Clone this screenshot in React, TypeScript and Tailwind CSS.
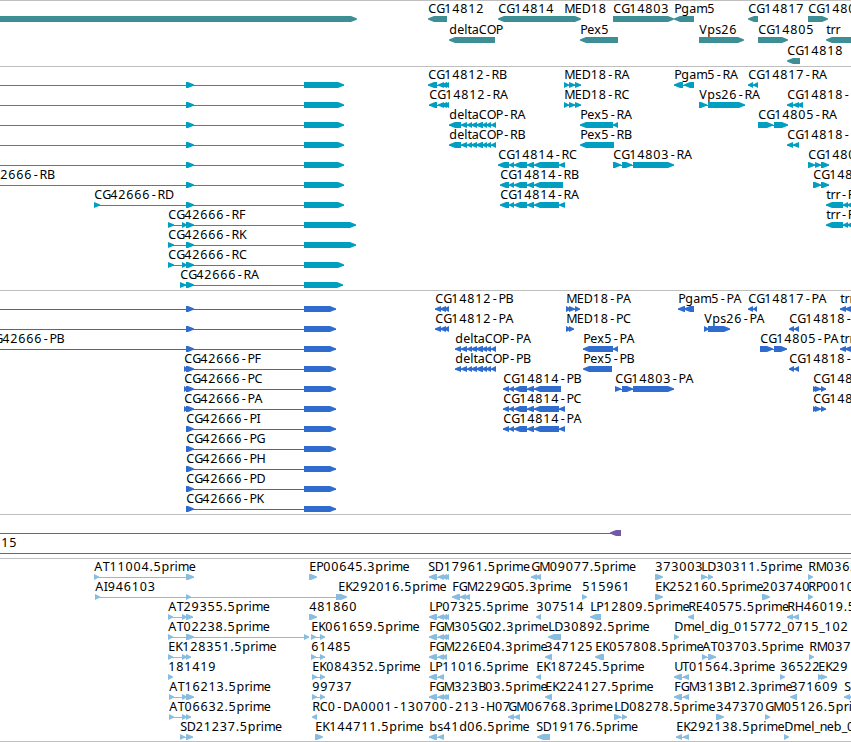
type Span = [number, number];
// row, label, label x, direction, exon spans
type Feature = [number, string, number, ">" | "<", Span[]];

const genes: Feature[] = [
  [0, "", 0, ">", [[-10, 357]]],
  [0, "CG14812", 428, "<", [[428, 447]]],
  [1, "deltaCOP", 449, "<", [[449, 495]]],
  [0, "CG14814", 498, "<", [[498, 566]]],
  [0, "MED18", 564, ">", [[564, 581]]],
  [1, "Pex5", 580, "<", [[580, 618]]],
  [0, "CG14803", 613, ">", [[613, 674]]],
  [0, "Pgam5", 674, "<", [[674, 694]]],
  [1, "Vps26", 699, ">", [[699, 744]]],
  [0, "CG14817", 748, "<", [[748, 758]]],
  [1, "CG14805", 758, ">", [[758, 788]]],
  [2, "CG14818", 787, "<", [[787, 800]]],
  [0, "CG14801", 808, ">", [[808, 828]]],
  [1, "trr", 826, "<", [[826, 862]]],
];

const longExons: Span[] = [[-10, -4], [186, 194], [304, 344]];
const copExons: Span[] = [[461, 467], [467, 472], [471, 477], [476, 483], [482, 487], [486, 491], [491, 496]];
const midExons: Span[] = [[509, 514], [514, 527], [527, 534]];

const transcripts: Feature[] = [
  [0, "", 0, ">", longExons],
  [1, "", 0, ">", longExons],
  [2, "", 0, ">", longExons],
  [3, "", 0, ">", longExons],
  [4, "", 0, ">", longExons],
  [5, "CG42666-RB", -24, ">", longExons],
  [6, "CG42666-RD", 94, ">", [[94, 100], [186, 194], [304, 344]]],
  [7, "CG42666-RF", 168, ">", [[168, 174], [182, 187], [186, 194], [304, 356]]],
  [8, "CG42666-RK", 168, ">", [[168, 174], [186, 194], [304, 356]]],
  [9, "CG42666-RC", 168, ">", [[168, 174], [182, 187], [186, 194], [304, 344]]],
  [10, "CG42666-RA", 180, ">", [[180, 186], [186, 194], [304, 343]]],
  [0, "CG14812-RB", 428, "<", [[428, 437], [438, 444], [441, 447], [444, 449]]],
  [1, "CG14812-RA", 429, "<", [[429, 437], [438, 444], [441, 447], [444, 449]]],
  [2, "deltaCOP-RA", 449, "<", [[449, 461], ...copExons]],
  [3, "deltaCOP-RB", 449, "<", [[449, 461], ...copExons]],
  [4, "CG14814-RC", 498, "<", [[498, 509], ...midExons, [534, 559], [559, 565]]],
  [5, "CG14814-RB", 500, "<", [[500, 509], ...midExons, [534, 563]]],
  [6, "CG14814-RA", 500, "<", [[500, 509], ...midExons, [534, 559], [559, 565]]],
  [0, "MED18-RA", 564, ">", [[564, 569], [569, 575], [575, 581]]],
  [1, "MED18-RC", 564, ">", [[564, 569], [569, 575], [575, 581]]],
  [2, "Pex5-RA", 580, "<", [[580, 613], [613, 618]]],
  [3, "Pex5-RB", 580, "<", [[580, 614]]],
  [4, "CG14803-RA", 613, ">", [[613, 621], [622, 632], [633, 674]]],
  [0, "Pgam5-RA", 674, "<", [[674, 683], [684, 694]]],
  [1, "Vps26-RA", 699, ">", [[699, 707], [708, 745]]],
  [0, "CG14817-RA", 748, "<", [[748, 753], [753, 758]]],
  [2, "CG14805-RA", 758, ">", [[758, 773], [774, 788]]],
  [1, "CG14818-RA", 787, "<", [[787, 793], [793, 799], [797, 803]]],
  [3, "CG14818-RB", 787, "<", [[787, 793], [793, 799]]],
  [4, "CG14801-RA", 808, ">", [[808, 815], [815, 821], [821, 829]]],
  [5, "CG14801-RB", 813, ">", [[813, 821], [821, 829]]],
  [6, "trr-RA", 826, "<", [[826, 843], [843, 848], [847, 855]]],
  [7, "trr-RB", 826, "<", [[826, 843], [843, 848], [847, 855]]],
];

const longCds: Span[] = [[-10, -4], [186, 194], [304, 336]];
const startCds: Span[] = [[184, 188], [186, 194], [304, 336]];
const shortCds: Span[] = [[186, 194], [304, 336]];

const proteins: Feature[] = [
  [0, "", 0, ">", longCds],
  [1, "", 0, ">", longCds],
  [2, "CG42666-PB", -14, ">", longCds],
  [3, "CG42666-PF", 184, ">", startCds],
  [4, "CG42666-PC", 184, ">", startCds],
  [5, "CG42666-PA", 184, ">", startCds],
  [6, "CG42666-PI", 186, ">", shortCds],
  [7, "CG42666-PG", 186, ">", shortCds],
  [8, "CG42666-PH", 186, ">", shortCds],
  [9, "CG42666-PD", 186, ">", shortCds],
  [10, "CG42666-PK", 186, ">", shortCds],
  [0, "CG14812-PB", 435, "<", [[435, 441], [440, 446], [444, 449]]],
  [1, "CG14812-PA", 435, "<", [[435, 441], [440, 446], [444, 449]]],
  [2, "deltaCOP-PA", 455, "<", [[455, 461], ...copExons]],
  [3, "deltaCOP-PB", 455, "<", [[455, 461], ...copExons]],
  [4, "CG14814-PB", 503, "<", [[503, 509], ...midExons, [534, 561]]],
  [5, "CG14814-PC", 503, "<", [[503, 509], ...midExons, [534, 559], [559, 565]]],
  [6, "CG14814-PA", 503, "<", [[503, 509], ...midExons, [534, 559], [559, 565]]],
  [0, "MED18-PA", 566, ">", [[566, 571], [569, 575], [575, 580]]],
  [1, "MED18-PC", 566, ">", [[566, 571], [569, 574]]],
  [2, "Pex5-PA", 583, "<", [[583, 613], [613, 618]]],
  [3, "Pex5-PB", 583, "<", [[583, 612]]],
  [4, "CG14803-PA", 615, ">", [[615, 621], [622, 633], [633, 674]]],
  [0, "Pgam5-PA", 678, "<", [[678, 685], [684, 694]]],
  [1, "Vps26-PA", 704, ">", [[704, 709], [708, 730]]],
  [0, "CG14817-PA", 748, "<", [[748, 753], [753, 757]]],
  [2, "CG14805-PA", 760, ">", [[760, 773], [774, 787]]],
  [1, "CG14818-PA", 789, "<", [[789, 794], [794, 799]]],
  [3, "CG14818-PB", 789, "<", [[789, 794], [794, 799]]],
  [4, "CG14801-PA", 813, ">", [[813, 818], [815, 821], [821, 826]]],
  [5, "CG14801-PB", 813, ">", [[813, 818], [815, 821], [821, 826]]],
  [0, "trr-PA", 840, "<", [[840, 846], [845, 851], [850, 856]]],
  [2, "trr-PB", 840, "<", [[840, 846], [845, 851], [850, 856]]],
];

const estFull: Span[] = [[429, 437], [438, 444], [442, 447], [444, 449]];
const estShort: Span[] = [[429, 437], [438, 444]];
const estPair: Span[] = [[312, 317], [320, 325]];

const ests: Feature[] = [
  [0, "AT11004.5prime", 94, ">", [[94, 99], [186, 194]]],
  [0, "EP00645.3prime", 309, ">", [[309, 317]]],
  [0, "SD17961.5prime", 428, "<", estFull],
  [0, "GM09077.5prime", 531, "<", [[531, 537], [535, 541]]],
  [0, "373003", 655, ">", [[655, 663]]],
  [0, "LD30311.5prime", 701, ">", [[701, 707], [708, 713]]],
  [0, "RM03621.5prime", 808, ">", [[808, 813]]],
  [1, "AI946103", 95, ">", [[95, 100], [186, 191], [336, 344]]],
  [1, "EK292016.5prime", 338, ">", [[339, 347]]],
  [1, "FGM229G05.3prime", 452, "<", [[452, 460], [460, 466], [464, 470]]],
  [1, "515961", 582, ">", [[582, 587]]],
  [1, "EK252160.5prime", 655, ">", [[655, 663]]],
  [1, "203740", 762, ">", [[762, 770]]],
  [1, "RP00101.5prime", 808, ">", [[808, 813]]],
  [2, "AT29355.5prime", 168, ">", [[168, 173], [182, 187], [186, 193]]],
  [2, "481860", 309, ">", [[309, 317]]],
  [2, "LP07325.5prime", 429, "<", estFull],
  [2, "307514", 536, "<", [[536, 541]]],
  [2, "LP12809.5prime", 590, "<", [[590, 601]]],
  [2, "RE40575.5prime", 688, "<", [[688, 694]]],
  [2, "RH46019.5prime", 787, "<", [[787, 793], [793, 799]]],
  [3, "AT02238.5prime", 168, ">", [[168, 173], [186, 194], [304, 309]]],
  [3, "EK061659.5prime", 311, ">", [[311, 316], [320, 325]]],
  [3, "FGM305G02.3prime", 429, "<", estFull],
  [3, "LD30892.5prime", 548, "<", [[548, 561]]],
  [3, "Dmel_dig_015772_0715_102", 674, ">", [[674, 679]]],
  [4, "EK128351.5prime", 168, ">", [[168, 173], [182, 187], [186, 191]]],
  [4, "61485", 311, ">", [[311, 316], [320, 325]]],
  [4, "FGM226E04.3prime", 429, "<", [[429, 437], [438, 444], [442, 447]]],
  [4, "347125", 545, "<", [[545, 552]]],
  [4, "EK057808.5prime", 595, "<", [[595, 604]]],
  [4, "AT03703.5prime", 702, ">", [[702, 707], [708, 716]]],
  [4, "RM03741.5prime", 809, ">", [[809, 814]]],
  [5, "181419", 168, ">", [[168, 173]]],
  [5, "EK084352.5prime", 312, ">", estPair],
  [5, "LP11016.5prime", 429, "<", estShort],
  [5, "EK187245.5prime", 536, "<", [[536, 541]]],
  [5, "UT01564.3prime", 674, "<", [[674, 682], [683, 689]]],
  [5, "36522", 780, ">", [[780, 785]]],
  [5, "EK29", 818, ">", [[818, 824], [821, 827]]],
  [6, "AT16213.5prime", 169, ">", [[169, 174], [182, 187], [186, 194]]],
  [6, "99737", 312, ">", estPair],
  [6, "FGM323B03.5prime", 429, "<", estFull],
  [6, "EK224127.5prime", 545, "<", [[545, 552]]],
  [6, "FGM313B12.3prime", 674, "<", [[674, 682], [683, 689]]],
  [6, "371609", 790, "<", [[790, 797]]],
  [6, "SD", 844, "<", [[844, 850], [849, 855]]],
  [7, "AT06632.5prime", 169, ">", [[169, 174], [182, 187], [186, 191]]],
  [7, "RC0-DA0001-130700-213-H07", 312, "<", [[312, 317]]],
  [7, "GM06768.3prime", 508, "<", [[508, 514], [514, 520]]],
  [7, "LD08278.5prime", 614, ">", [[614, 621], [622, 627]]],
  [7, "347370", 716, ">", [[716, 724]]],
  [7, "GM05126.5prime", 765, ">", [[765, 770]]],
  [8, "SD21237.5prime", 180, ">", [[180, 185], [186, 193]]],
  [8, "EK144711.5prime", 315, ">", [[315, 323]]],
  [8, "bs41d06.5prime", 429, "<", estShort],
  [8, "SD19176.5prime", 536, "<", [[537, 550]]],
  [8, "EK292138.5prime", 676, "<", [[676, 682], [683, 689]]],
  [8, "Dmel_neb_0", 784, ">", [[784, 789]]],
];

// glyph advances for the labels, digits and unlisted glyphs are 8px
const advances: Record<string, number> = {
  A: 8.5, B: 7, D: 9, E: 7, F: 6.5, H: 9, I: 4, K: 7, L: 6, M: 10.5, O: 9, P: 7, R: 7.5, S: 6.5, T: 6.8,
  "-": 7.2, ".": 4, _: 5.2,
  a: 7, e: 7, i: 3.2, l: 3.2, m: 11, n: 7, r: 5, s: 6, t: 4.2, x: 7,
};

function glyphPositions(label: string, x: number) {
  let pos = x + 0.3;
  return [...label]
    .map((c) => {
      // the hyphen is centred in its cell
      const at = c === "-" ? pos + 1.5 : pos;
      pos += advances[c] ?? 8;
      return at.toFixed(1);
    })
    .join(" ");
}

function arrow([a, b]: Span, dir: ">" | "<", y: number) {
  const head = Math.min(6, b - a);
  const from = dir === ">" ? a : b;
  const tip = dir === ">" ? b : a;
  const d = dir === ">" ? -1 : 1;
  return `${from},${y} ${tip + d * head},${y} ${tip + d},${y + 2} ${tip},${y + 2.5} ${tip},${y + 3.5} ${tip + d},${y + 4} ${tip + d * head},${y + 6} ${from},${y + 6}`;
}

type TrackProps = {
  features: Feature[];
  className: string;
  top?: number;
  pitch?: number;
};

function Track({ features, className, top = 15, pitch = 20 }: TrackProps) {
  return (
    <section className={`w-full shrink-0 overflow-hidden border-t border-[#bfbfbf] ${className}`}>
      <svg className="block h-full w-full">
        {features.map(([row, label, x, dir, spans], i) => {
          const y = top + row * pitch;
          const start = spans[0][0];
          const end = spans[spans.length - 1][1];
          return (
            <g key={i}>
              {spans.length > 1 && (
                <rect x={start} y={y + 3} width={end - start} height={1} fill="currentColor" />
              )}
              {spans.map((span, j) => (
                <polygon key={j} points={arrow(span, dir, y)} fill="currentColor" />
              ))}
              {label && (
                <text x={glyphPositions(label, x)} y={y - 3} className="fill-black">
                  {label}
                </text>
              )}
            </g>
          );
        })}
      </svg>
    </section>
  );
}

export default function App() {
  return (
    <main className="flex h-[742px] w-[851px] flex-col overflow-hidden border-b border-[#bfbfbf] bg-white font-['Noto_Sans',sans-serif] text-[12.5px]">
      <Track features={genes} className="h-[66px] text-[#3e8e95]" pitch={21} />
      <Track features={transcripts} className="h-[224px] text-[#009fc1]" />
      <Track features={proteins} className="h-[224px] text-[#306ccd]" />
      <section className="h-11 shrink-0 border-t border-[#bfbfbf] text-[#7159a6]">
        <svg className="block h-full w-full">
          <rect x={0} y={18} width={621} height={1} fill="currentColor" />
          <polygon points={arrow([610, 621], "<", 15)} fill="currentColor" />
          <text x={glyphPositions("15", 1)} y={32} className="fill-black">15</text>
          <rect x={0} y={38} width={851} height={1} fill="currentColor" />
        </svg>
      </section>
      <Track features={ests} className="h-[183px] text-[#89bddf]" />
    </main>
  );
}
